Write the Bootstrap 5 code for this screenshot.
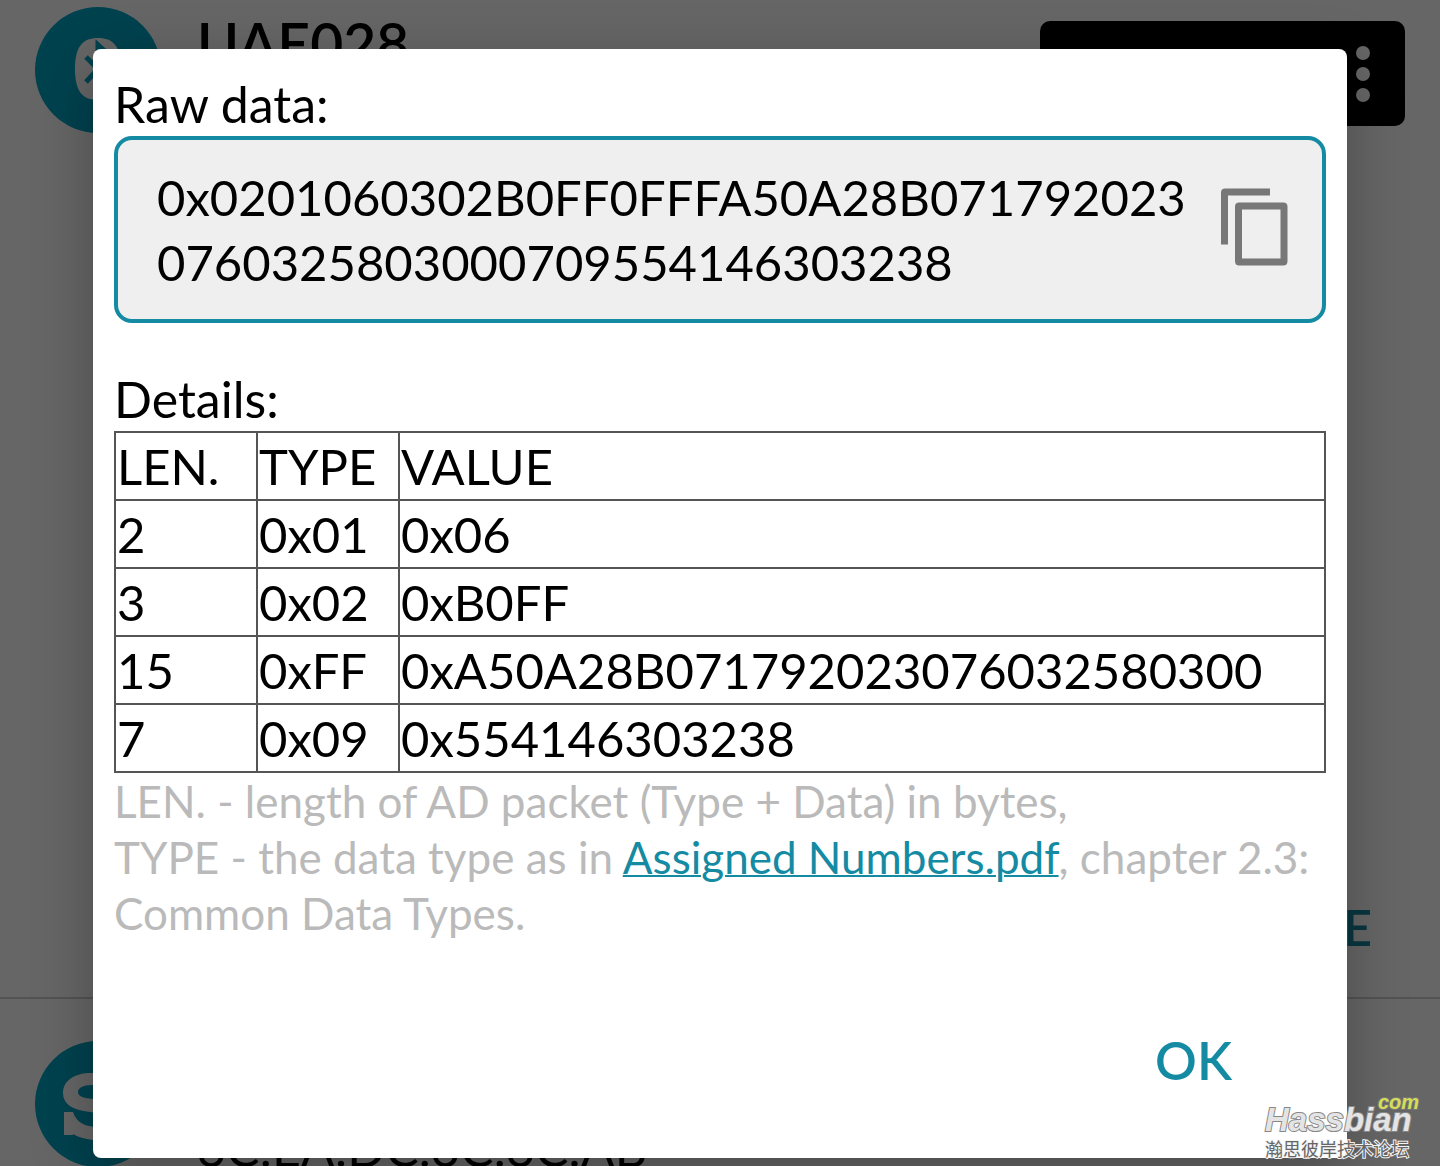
<!DOCTYPE html>
<html lang="en">
<head>
<meta charset="utf-8">
<meta name="viewport" content="width=device-width, initial-scale=1">
<title>Raw data</title>
<link href="https://cdn.jsdelivr.net/npm/bootstrap@5.3.0/dist/css/bootstrap.min.css" rel="stylesheet">
<style>
:root { --teal: #148ba3; }
body { font-family: Lato, "Noto Sans", sans-serif; font-size: 50px; color: #000; background: #fff; min-height: 100vh; }
.screen { height: 100vh; min-height: 1166px; }
.device { padding: 7px 35px 0; min-height: 999px; border-bottom: 2px solid #d0d0d0; }
.device-next { padding: 42px 35px 0; }
.avatar { width: 126px; height: 126px; flex: none; }
.device-title { margin-left: 36px; font-size: 57px; font-weight: 600; line-height: 72px; }
.device-address { margin-left: 36px; margin-top: 78px; line-height: 58px; }
.connect { width: 365px; height: 105px; margin-top: 14px; padding: 0 30px; background: #000; border: 0; border-radius: 10px; }
.more-link { color: var(--teal); font-weight: 600; line-height: 60px; border: 0; background: none; padding: 0; margin: 0 33px 40px 0; }
.scrim { background: rgba(0,0,0,.6); padding: 49px 93px 8px; }
.dialog-panel { background: #fff; border: 0; border-radius: 8px; padding: 24px 21px 57px; box-shadow: 0 16px 60px rgba(0,0,0,.28); color: #000; }
.section-title { font-size: 50px; font-weight: 400; line-height: 62px; margin: 0; }
.raw-box { background: #efefef; border: 4px solid var(--teal); border-radius: 18px; padding: 25px 24px 24px 39px; margin: 1px 0 45px; }
.raw-text { font-size: 49px; line-height: 65px; word-break: break-all; }
.copy-btn { flex: none; border: 0; padding: 0; background: none; line-height: 0; margin-bottom: 6px; }
.packets { width: 100%; table-layout: fixed; border-collapse: collapse; line-height: 66px; margin: 1px 0 0; }
.packets th, .packets td { border: 2px solid #555; padding: 0 1px; font-weight: 400; }
.packets th, .packets td { font-size: 49px; }
.packets .narrow { width: 142px; }
.legend-text { font-size: 44px; line-height: 56px; color: #bababa; margin: 0; }
.legend-text a { color: var(--teal); text-decoration-thickness: 2px; }
.ok-btn { color: var(--teal); font-size: 52px; font-weight: 600; line-height: 62px; padding: 0; border: 0; margin: 88px 94px 0 0; }
.watermark { right: 20px; bottom: 6px; width: 155px; color: #e4e4e4; font-family: "Liberation Sans", sans-serif; z-index: 3; pointer-events: none; }
.watermark .site { font-size: 33px; line-height: 32px; font-weight: 700; font-style: italic; paint-order: stroke; -webkit-text-stroke: 2px #888; }
.watermark .tld { right: 1px; top: -13px; font-size: 20px; line-height: 22px; font-weight: 700; font-style: italic; color: #d5dd58; paint-order: stroke; -webkit-text-stroke: 2px #777; }
.watermark .forum { font-family: "Noto Sans CJK SC", sans-serif; font-size: 18px; line-height: 24px; color: #666; paint-order: stroke; -webkit-text-stroke: 2px #f4f4f4; }
</style>
<script src="https://cdn.jsdelivr.net/npm/bootstrap@5.3.0/dist/js/bootstrap.bundle.min.js"></script>
</head>
<body>
<div class="screen position-relative overflow-hidden">
  <main>
    <section class="device d-flex flex-column justify-content-between">
      <div class="d-flex align-items-start">
        <svg class="avatar" viewBox="0 0 126 126" aria-hidden="true">
          <circle cx="63" cy="63" r="63" fill="#00a5c5"/>
          <path d="M63 31C48 31 40 39 40 62s8 31 23 31 23-8 23-31-8-31-23-31z" fill="#fff"/>
          <path d="M51 50l24 24-12 11V38l12 11-24 26" fill="none" stroke="#00a5c5" stroke-width="5"/>
        </svg>
        <div class="device-title">UAE028</div>
        <button class="connect ms-auto d-flex align-items-center justify-content-end" type="button" aria-label="Options">
          <svg width="24" height="60" viewBox="0 0 24 60" fill="#fff"><circle cx="12" cy="9" r="7"/><circle cx="12" cy="30" r="7"/><circle cx="12" cy="51" r="7"/></svg>
        </button>
      </div>
      <button class="more-link align-self-end" type="button">MORE</button>
    </section>
    <section class="device-next d-flex align-items-start">
      <svg class="avatar" viewBox="0 0 126 126" aria-hidden="true">
        <circle cx="63" cy="63" r="63" fill="#00a5c5"/>
        <path d="M29 71h9c3 10 12 15 25 15 10 0 14-3 14-7 0-5-6-6-22-8-18-2-27-8-27-19 0-12 11-20 28-20 9 0 16 2 21 6l3-5h8v26h-9c-4-10-12-15-22-15-9 0-14 3-14 7 0 5 6 6 21 8 20 2 29 8 29 20 0 13-12 20-29 20-10 0-19-2-26-6v1h-9z" fill="#fff"/>
      </svg>
      <div class="device-address">3C:EA:DC:3C:3C:AB</div>
    </section>
  </main>

  <div class="scrim position-absolute top-0 start-0 w-100 h-100">
    <div class="dialog-panel modal-content h-100" role="dialog" aria-modal="true" aria-labelledby="raw-title">
      <h1 class="section-title" id="raw-title">Raw data:</h1>
      <div class="raw-box d-flex align-items-center justify-content-between">
        <div class="raw-text">0x0201060302B0FF0FFFA50A28B071792023<wbr>0760325803000709554146303238</div>
        <button class="copy-btn" type="button" aria-label="Copy raw data">
          <svg width="84" height="84" viewBox="0 0 24 24" fill="#777"><path d="M16 1H3.200Q2 1 2 2.200V17h2V3h12z"/><path fill-rule="evenodd" d="M7.200 5h12.600Q21 5 21 6.200v15.600Q21 23 19.800 23H7.200Q6 23 6 21.800V6.200Q6 5 7.200 5zM8 7v14h11V7z"/></svg>
        </button>
      </div>
      <h2 class="section-title" id="details-title">Details:</h2>
      <table class="packets" aria-labelledby="details-title">
        <thead><tr><th class="narrow" scope="col">LEN.</th><th class="narrow" scope="col">TYPE</th><th scope="col">VALUE</th></tr></thead>
        <tbody>
          <tr><td>2</td><td>0x01</td><td>0x06</td></tr>
          <tr><td>3</td><td>0x02</td><td>0xB0FF</td></tr>
          <tr><td>15</td><td>0xFF</td><td>0xA50A28B071792023076032580300</td></tr>
          <tr><td>7</td><td>0x09</td><td>0x554146303238</td></tr>
        </tbody>
      </table>
      <p class="legend-text">LEN. - length of AD packet (Type + Data) in bytes,<br>TYPE - the data type as in <a href="#">Assigned Numbers.pdf</a>, chapter 2.3:<br>Common Data Types.</p>
      <button class="ok-btn btn align-self-end" type="button">OK</button>
    </div>
  </div>

  <div class="watermark position-absolute">
    <div class="tld position-absolute">com</div>
    <div class="site">Hassbian</div>
    <div class="forum" lang="zh">瀚思彼岸技术论坛</div>
  </div>
</div>
</body>
</html>
